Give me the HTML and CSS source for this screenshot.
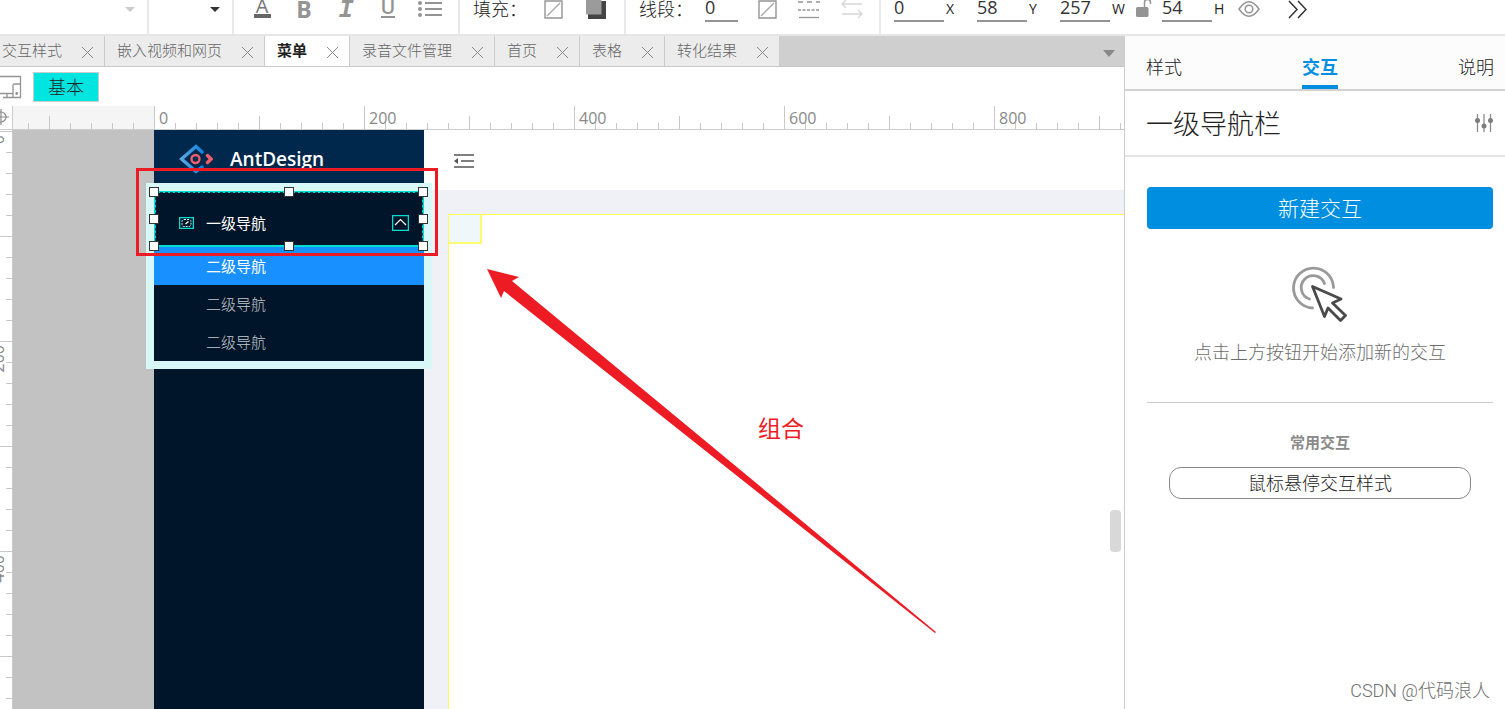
FILE: index.html
```html
<!DOCTYPE html>
<html lang="zh-CN">
<head>
<meta charset="utf-8">
<title>菜单</title>
<link rel="stylesheet" href="styles.css">
</head>
<body>
<header class="toolbar">
  <div class="group group-font"><button class="caret caret-light" aria-label="字体"></button></div>
  <div class="group group-size"><button class="caret" aria-label="字号"></button></div>
  <div class="group group-format">
    <button class="fmt fmt-color">A</button>
    <button class="fmt fmt-bold">B</button>
    <button class="fmt fmt-italic">I</button>
    <button class="fmt fmt-under">U</button>
    <button class="fmt" aria-label="列表">
      <svg width="24" height="20" viewBox="0 0 24 20" fill="#949494"><circle cx="2" cy="4" r="2"/><circle cx="2" cy="10" r="2"/><circle cx="2" cy="16" r="2"/><path d="M7 3h17v2H7zM7 9h17v2H7zM7 15h17v2H7z"/></svg>
    </button>
  </div>
  <div class="group group-fill">
    <span class="label">填充：</span>
    <button class="icon" aria-label="填充颜色"><svg width="19" height="19" viewBox="0 0 19 19" fill="none" stroke="#949494"><path stroke-width="1.4" d="M1 1h17v17H1z"/><path stroke-width="1.4" stroke="#aaa" d="M3 16 16 3"/></svg></button>
    <button class="icon" aria-label="阴影"><svg width="22" height="20" viewBox="0 0 22 20"><path fill="#444" d="M2 2h18v18H2z"/><path fill="#9b9b9b" d="M0 0h15.500v15.500H0z"/></svg></button>
  </div>
  <div class="group group-line">
    <label class="label" for="lw">线段：</label>
    <input class="num num-short" id="lw" value="0">
    <button class="icon" aria-label="线段颜色"><svg width="19" height="19" viewBox="0 0 19 19" fill="none" stroke="#949494"><path stroke-width="1.4" d="M1 1h17v17H1z"/><path stroke-width="1.4" stroke="#aaa" d="M3 16 16 3"/></svg></button>
    <button class="icon" aria-label="线型"><svg width="24" height="19" viewBox="0 0 24 19" fill="none" stroke="#949494" stroke-width="1.300"><path stroke-dasharray="5 4" d="M1 2h22"/><path stroke-dasharray="3 1.500" d="M1 10h22"/><path d="M2 17.500h20"/></svg></button>
    <button class="icon" aria-label="箭头"><svg width="22" height="19" viewBox="0 0 22 19" fill="none" stroke="#d6d6d6" stroke-width="1.300"><path d="M21 4H1M5 0 1 4l4 4M1 14h20M17 10l4 4-4 4"/></svg></button>
  </div>
  <div class="group group-pos">
    <input class="num" id="px" value="0"><label class="axis" for="px">X</label>
    <input class="num" id="py" value="58"><label class="axis" for="py">Y</label>
    <input class="num" id="pw" value="257"><label class="axis axis-w" for="pw">W</label>
    <button class="icon lock" aria-label="锁定宽高比"><svg width="16" height="20" viewBox="0 0 16 20"><rect y="8" width="12.500" height="10" rx="1.500" fill="#949494"/><path fill="none" stroke="#949494" stroke-width="1.500" d="M8.500 8V3.500a3 3 0 0 1 6 0V5"/></svg></button>
    <input class="num" id="ph" value="54"><label class="axis" for="ph">H</label>
    <button class="icon eye" aria-label="可见性"><svg width="22" height="18" viewBox="0 0 22 18" fill="none" stroke="#949494" stroke-width="1.500"><path d="M1 9Q11-5.500 21 9 11 23.500 1 9z"/><circle cx="11" cy="9" r="3.800"/></svg></button>
    <button class="icon more" aria-label="更多"><svg width="19" height="19" viewBox="0 0 19 19" fill="none" stroke="#333" stroke-width="1.500"><path d="m1 1 8 8.500-8 8.500M10 1l8 8.500-8 8.500"/></svg></button>
  </div>
</header>

<div class="work">
  <main class="editor">
    <nav class="tabs">
      <div class="tab tab-cut"><span>交互样式</span><button class="close" aria-label="关闭"></button></div>
      <div class="tab"><span>嵌入视频和网页</span><button class="close" aria-label="关闭"></button></div>
      <div class="tab tab-on"><span>菜单</span><button class="close" aria-label="关闭"></button></div>
      <div class="tab"><span>录音文件管理</span><button class="close" aria-label="关闭"></button></div>
      <div class="tab"><span>首页</span><button class="close" aria-label="关闭"></button></div>
      <div class="tab"><span>表格</span><button class="close" aria-label="关闭"></button></div>
      <div class="tab"><span>转化结果</span><button class="close" aria-label="关闭"></button></div>
      <button class="caret caret-tabs" aria-label="全部标签"></button>
    </nav>
    <div class="views">
      <svg width="22" height="24" viewBox="0 0 22 24" fill="none" stroke="#949494" stroke-width="1.300"><path d="M0 1.500h20.500v21H13V10.500q0-1.500 1.500-1.500h6M0 18.500h13M7 19v3.500M3 22.500h10"/><circle cx="16.700" cy="18.500" r=".8" fill="#949494"/></svg>
      <button class="chip">基本</button>
    </div>
    <div class="ruler-x">
      <div class="origin"><svg width="9" height="16" viewBox="0 0 9 16" fill="none" stroke="#8c8c8c" stroke-width="1.200"><path d="M0 8h9M1 0v16"/><circle cx="1" cy="8" r="5"/></svg></div>
      <div class="seg seg-lead"></div>
      <div class="seg">0</div><div class="seg">200</div><div class="seg">400</div><div class="seg">600</div><div class="seg">800</div>
    </div>
    <div class="board">
      <div class="ruler-y"><div class="vseg"><span>0</span></div><div class="vseg"><span>200</span></div><div class="vseg"><span>400</span></div></div>
      <div class="canvas">
        <div class="sider">
          <div class="brand">
            <svg width="34" height="30" viewBox="0 0 34 30" fill="none" stroke-width="3.400" stroke-linecap="round"><defs><linearGradient id="g" x1="0" x2="1"><stop offset="0" stop-color="#5aa6e0"/><stop offset="1" stop-color="#1583e0"/></linearGradient></defs><path stroke="url(#g)" d="M23 8 17 2.500 2.500 15 17 27.500 23 23"/><path stroke="#ef5e6a" d="m28.500 11.500 3.500 3.500-3.500 3.500"/><circle cx="16.500" cy="15" r="4" stroke="#ef5e6a" stroke-width="2.400"/></svg>
            <b>AntDesign</b>
          </div>
          <div class="menu">
            <div class="menu-top">
              <svg width="15" height="12" viewBox="0 0 15 12" fill="none"><path stroke="#00ddd5" stroke-width="1.300" d="M.6.6h13.800v10.800H.6z"/><rect x="3" y="2.500" width="9" height="7" rx="2" stroke="#bfe" stroke-dasharray="2 1"/><path stroke="#fff" stroke-width="1.300" d="m6.500 7 3-2.500"/></svg>
              <span>一级导航</span>
              <svg class="fold" width="17" height="16" viewBox="0 0 17 16" fill="none"><path stroke="#00ddd5" stroke-width="1.300" d="M.6.600h15.800v14.800H.6z"/><path stroke="#fff" stroke-width="1.200" d="m3 10 5.500-5.500L14 10"/></svg>
              <i class="h h-l h-t"></i><i class="h h-c h-t"></i><i class="h h-r h-t"></i>
              <i class="h h-l h-m"></i><i class="h h-r h-m"></i>
              <i class="h h-l h-b"></i><i class="h h-c h-b"></i><i class="h h-r h-b"></i>
            </div>
            <div class="menu-item menu-on">二级导航</div>
            <div class="menu-item">二级导航</div>
            <div class="menu-item">二级导航</div>
          </div>
        </div>
        <div class="page">
          <div class="page-head"><svg width="20" height="14" viewBox="0 0 20 14" fill="none" stroke="#555" stroke-width="1.400"><path d="M0 1h20M7 7h13M0 13h20"/><path d="M0 7l4-3v6z" fill="#555" stroke="none"/></svg></div>
          <div class="page-body"><div class="frame"><div class="cell"></div></div></div>
        </div>
        <div class="redbox"></div>
        <svg class="arrow" width="450" height="365" viewBox="0 0 450 365"><path fill="#ed1c24" d="M0 0 32 8l-7 4 424 351-1 1L17 22l-3 7z"/></svg>
        <div class="note">组合</div>
        <div class="thumb"></div>
      </div>
    </div>
  </main>

  <aside class="panel">
    <nav class="ptabs"><button>样式</button><button class="ptab-on">交互</button><button>说明</button></nav>
    <div class="ptitle"><h1>一级导航栏</h1>
      <svg width="18" height="20" viewBox="0 0 18 20" fill="#7d7d7d" stroke="#8c8c8c" stroke-width="1.300"><path d="M2.500 1v18M9 1v18M15.500 1v18"/><g stroke="none"><circle cx="2.500" cy="7.500" r="2.500"/><circle cx="9" cy="13" r="2.500"/><circle cx="15.500" cy="7.500" r="2.500"/></g></svg>
    </div>
    <div class="pbody">
      <button class="primary">新建交互</button>
      <svg class="click" width="56" height="56" viewBox="0 0 56 56" fill="none" stroke-width="2.800" stroke-linecap="round" stroke-linejoin="round"><g stroke="#999"><path d="M41.500 21.500A20 20 0 1 0 20.500 42"/><path d="M32.500 17.500A12 12 0 1 0 17.500 33"/></g><path stroke="#4a4a4a" d="M20.500 20.500 49 33l-8.500 4 13 12.500-5 5L36 42l-3.500 8.500z"/></svg>
      <p class="hint">点击上方按钮开始添加新的交互</p>
      <hr>
      <h2>常用交互</h2>
      <button class="outline">鼠标悬停交互样式</button>
    </div>
    <footer class="mark">CSDN @代码浪人</footer>
  </aside>
</div>
</body>
</html>
```

FILE: styles.css
```css
* { box-sizing: border-box; }
body {
  margin: 0;
  height: 100vh;
  display: flex;
  flex-direction: column;
  overflow: hidden;
  background: #fff;
  color: #222;
  font: 300 15px/20px "Open Sans", "Noto Sans CJK SC", sans-serif;
}
button { border: 0; padding: 0; margin: 0; background: none; color: inherit; font: inherit; }
svg { display: block; flex: none; }

/* toolbar */
.toolbar { display: flex; flex: none; height: 36px; border-bottom: 2px solid #e6e6e6; }
.group { display: flex; flex: none; align-items: center; height: 34px; padding-bottom: 16px; border-right: 2px solid #e9e9e9; }
.group-font { width: 149px; justify-content: flex-end; padding-right: 12px; }
.group-size { width: 85px; justify-content: flex-end; padding-right: 12px; }
.group-format { width: 226px; padding-left: 7px; }
.group-fill { width: 166px; padding-left: 13px; }
.group-line { width: 255px; padding-left: 13px; }
.group-pos { flex: 1; border: 0; padding-left: 13px; }
.caret { border: 5px solid transparent; border-top-color: #333; border-bottom: 0; }
.caret-light { border-top-color: #ccc; }
.fmt { width: 42px; display: flex; flex-direction: column; align-items: center; color: #949494; font-weight: 600; }
.fmt-color { font-size: 20px; font-weight: 400; line-height: 12px; color: #777; }
.fmt-color::after { content: ""; width: 17px; height: 4px; margin-top: 2px; background: #666; }
.fmt-bold { font-size: 23px; font-weight: 700; line-height: 18px; }
.fmt-italic { padding-top: 4px; font: italic 700 25px/22px "Liberation Mono", monospace; }
.fmt-under { font-size: 20px; line-height: 12px; }
.fmt-under::after { content: ""; width: 14px; height: 2px; margin-top: 3px; background: #949494; }
.label { width: 54px; font-size: 18px; white-space: nowrap; }
.group-fill .icon { margin-left: 17px; }
.group-fill .icon + .icon { margin-left: 23px; }
.group-line .icon { margin-left: 20px; }
.num { width: 50px; height: 26px; flex: none; padding: 0 0 2px; border: 0; border-bottom: 2px solid #949494; background: none; color: #333; font: 18px/22px "Open Sans", sans-serif; outline: 0; }
.num-short { width: 33px; margin-left: 12px; }
.axis { width: 33px; padding-left: 2px; font-size: 14px; font-weight: 400; }
.axis-w { width: 26px; }
.lock { width: 26px; }
.eye { margin-left: -7px; }
.more { margin-left: 28px; }

.work { flex: 1; display: flex; min-height: 0; }
.editor { flex: 1; min-width: 0; display: flex; flex-direction: column; }

/* page tabs */
.tabs { display: flex; flex: none; height: 31px; background: #cfcfcf; border-bottom: 1px solid #c8c8c8; }
.tab { display: flex; flex: none; align-items: center; gap: 20px; padding: 0 11px 3px 12px; border-right: 1px solid #ccc; background: #ececec; color: #666; }
.tab-cut { padding-left: 2px; }
.tab-on { background: #fff; color: #222; font-weight: 700; }
.close { width: 11px; height: 11px; margin-top: 5px; background: linear-gradient(45deg, transparent 46%, #888 46%, #888 54%, transparent 54%), linear-gradient(-45deg, transparent 46%, #888 46%, #888 54%, transparent 54%); }
.caret-tabs { margin: 14px 9px 0 auto; height: 7px; border-width: 7px 6px 0; border-top-color: #888; }

.views { display: flex; flex: none; align-items: center; height: 39px; gap: 11px; }
.chip { width: 66px; height: 30px; border: 1px solid #ccc; background: #00e5e0; font-size: 18px; }

/* rulers */
.ruler-x { display: flex; flex: none; height: 24px; overflow: hidden; color: #888; font-weight: 400; border-bottom: 1px solid #ccc; }
.origin { width: 13px; flex: none; padding-top: 3px; border-right: 1px solid #ccc; }
.seg {
  width: 210px; flex: none; padding: 2px 0 0 5px; font-size: 16px;
  background:
    linear-gradient(#c8c8c8, #c8c8c8) 0 0 / 1px 100% no-repeat,
    linear-gradient(#c8c8c8, #c8c8c8) 105px 100% / 1px 13px no-repeat,
    linear-gradient(to right, #c8c8c8 1px, transparent 1px) 0 100% / 21px 6px repeat-x;
}
.seg-lead {
  width: 141px;
  background:
    linear-gradient(#c8c8c8, #c8c8c8) 36px 100% / 1px 13px no-repeat,
    linear-gradient(to right, #c8c8c8 1px, transparent 1px) 15px 100% / 21px 6px repeat-x,
    #f5f5f5;
}
.board { flex: 1; display: flex; min-height: 0; }
.ruler-y { width: 13px; flex: none; padding-top: 1px; overflow: hidden; border-right: 1px solid #c8c8c8; color: #888; font-size: 16px; font-weight: 400; }
.vseg {
  height: 210px; display: flex; justify-content: flex-end; padding: 4px 4px 0 0;
  background:
    linear-gradient(#c8c8c8 1px, transparent 1px) 0 0 / 100% 105px repeat-y,
    linear-gradient(#c8c8c8 1px, transparent 1px) 100% 0 / 6px 21px repeat-y;
}
.vseg span { writing-mode: vertical-rl; transform: rotate(180deg); align-self: flex-start; }

/* canvas */
.canvas { position: relative; flex: 1; min-width: 0; display: flex; overflow: hidden; padding-left: 141px; background: #c2c2c2; }
.sider { width: 270px; flex: none; background: #001529; color: #fff; z-index: 1; }
.brand { display: flex; align-items: center; gap: 17px; height: 61px; padding: 0 0 4px 25px; background: #00284d; font-size: 19px; }
.brand b { font-weight: 600; }
.menu { background: #001529; box-shadow: 0 0 0 8px #d7f8f6; }
.menu-top { position: relative; display: flex; align-items: center; height: 56px; padding: 8px 13px 0 23px; border: 2px solid #00ddd5; }
.menu-top::before { content: ""; position: absolute; inset: -1px; border: 1px dashed #00474d; border-bottom: 0; }
.menu-top span { margin-left: 12px; }
.menu-top span, .menu-on { font-weight: 400; }
.fold { margin-left: auto; }
.menu-item { height: 38px; padding-left: 52px; line-height: 38px; color: #c4c9ce; }
.menu-on { background: #1890ff; color: #fff; }
.h { position: absolute; width: 10px; height: 10px; border: 1px solid #333; background: #fff; }
.h-l { left: -7px; } .h-c { left: calc(50% - 5px); } .h-r { right: -6px; }
.h-t { top: -6px; } .h-m { top: calc(50% - 5px); } .h-b { bottom: -6px; }
.page { flex: 1; display: flex; flex-direction: column; background: #f0f2f5; }
.page-head { height: 60px; flex: none; padding: 24px 30px; background: #fff; }
.page-body { flex: 1; display: flex; padding: 24px 0 0 24px; background: #f0f1f6; }
.frame { flex: 1; background: #fff; border: solid #ffff50; border-width: 1px 0 0 1px; }
.cell { width: 33px; height: 29px; background: #f0f7fa; border: solid #fdfb70; border-width: 0 2px 2px 0; }
.redbox { position: absolute; z-index: 2; left: 123px; top: 38px; width: 302px; height: 88px; border: 3px solid #ed1c24; }
.arrow { position: absolute; left: 474px; top: 139px; }
.note { position: absolute; left: 745px; top: 283px; font-size: 23px; font-weight: 400; line-height: 30px; color: #ed1c24; }
.thumb { position: absolute; right: 3px; top: 380px; width: 11px; height: 42px; border-radius: 4px; background: #d8d8d8; }

/* right panel */
.panel { width: 381px; flex: none; display: flex; flex-direction: column; border-left: 1px solid #ccc; }
.ptabs { display: flex; justify-content: space-between; height: 55px; flex: none; padding: 12px 11px 0 21px; border-bottom: 2px solid #d2d2d2; background: #fcfcfc; font-size: 18px; }
.ptabs button { border-bottom: 4px solid transparent; }
.ptabs .ptab-on { color: #008fe0; font-weight: 700; border-color: #008fe0; }
.ptitle { display: flex; align-items: center; justify-content: space-between; height: 66px; flex: none; padding: 0 12px 0 21px; border-bottom: 2px solid #e6e6e6; }
h1 { margin: 0; padding-top: 2px; font-size: 27px; font-weight: 300; line-height: 40px; }
.pbody { display: flex; flex-direction: column; padding: 30px 12px 0 22px; }
.primary { height: 42px; border-radius: 4px; background: #008fe0; color: #fff; font-size: 21px; }
.click { align-self: center; margin-top: 37px; }
.hint { margin: 18px 0 0; line-height: 24px; font-size: 18px; text-align: center; color: #6c6c6c; }
hr { width: 100%; height: 1px; margin: 38px 0 29px; border: 0; background: #ccc; }
h2 { margin: 0; font-size: 15px; line-height: 20px; text-align: center; color: #8a8a8a; }
.outline { height: 32px; margin: 15px 22px 0; border: 1px solid #888; border-radius: 12px; font-size: 18px; }
.mark { margin-top: auto; padding: 0 15px 6px 0; text-align: right; color: #707070; font: 300 18px/24px Roboto, "Noto Sans CJK SC", sans-serif; }
```
